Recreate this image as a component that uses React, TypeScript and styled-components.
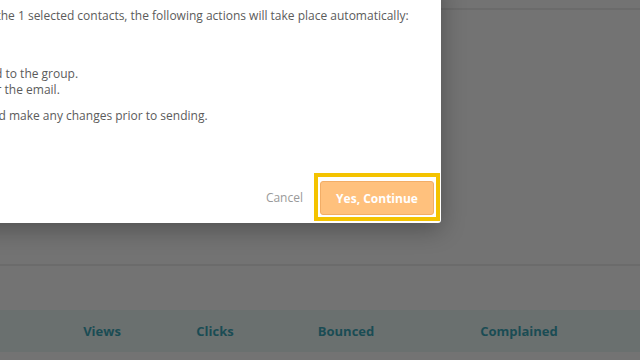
import React from "react";
import styled, { createGlobalStyle } from "styled-components";

const GlobalStyle = createGlobalStyle`
  html, body {
    margin: 0;
    padding: 0;
    width: 640px;
    height: 360px;
    overflow: hidden;
    background: #737373;
    font-family: "Open Sans", "Liberation Sans", sans-serif;
  }
`;

const Page = styled.div`
  position: relative;
  width: 640px;
  height: 360px;
  overflow: hidden;
  background: #737373;
  display: flex;
  flex-direction: column;
`;

const TopRule = styled.div`
  margin-top: 8px;
  height: 2px;
  background: #6b6b6b;
`;

const Content = styled.div`
  height: 254px;
  border-bottom: 2px solid #6b6b6b;
`;

const Spacer = styled.div`
  height: 44px;
`;

const TableHead = styled.div`
  height: 42px;
  background: #6a706f;
  display: grid;
  grid-template-columns: 44px 116px 110px 152px 194px 1fr;
  align-items: center;
`;

const HeadCell = styled.div`
  text-align: center;
  font-size: 13px;
  font-weight: 700;
  color: #1a4c54;
`;

const Modal = styled.div`
  position: absolute;
  left: -160px;
  top: -20px;
  width: 601px;
  height: 243px;
  background: #ffffff;
  border-radius: 3px;
  box-shadow: 0 6px 24px rgba(0, 0, 0, 0.3);
  display: flex;
  flex-direction: column;
`;

const Body = styled.div`
  flex: 1;
  padding: 28px 20px 0 0;
  font-size: 12px;
  line-height: 16px;
  color: #5b5b5b;
`;

const Para = styled.p<{ $gap?: number }>`
  margin: 0 0 ${(p) => p.$gap ?? 0}px 0;
  white-space: nowrap;
`;

const Lead = styled(Para)`
  padding-left: 91px;
`;

const List = styled.ul`
  margin: 0 0 10px 0;
  padding: 0 0 0 20px;
  list-style: none;
  white-space: nowrap;
`;

const Footer = styled.div`
  display: flex;
  justify-content: flex-end;
  align-items: center;
  gap: 11px;
  padding: 0 1px 2px 0;
`;

const CancelButton = styled.button`
  border: none;
  background: none;
  font-family: inherit;
  font-size: 12px;
  color: #9a9a9a;
  padding: 0;
  cursor: pointer;
`;

const FocusRing = styled.div`
  border: 4px solid #f4c300;
  padding: 4px 2px 2px 2px;
  display: flex;
`;

const PrimaryButton = styled.button`
  width: 114px;
  height: 34px;
  border: 1px solid #f2ad66;
  border-radius: 3px;
  background: #ffc17d;
  color: #ffffff;
  font-family: inherit;
  font-size: 12px;
  font-weight: 700;
  outline: none;
  cursor: pointer;
`;

const App: React.FC = () => {
  return (
    <>
      <GlobalStyle />
      <Page>
        <TopRule />
        <Content />
        <Spacer />
        <TableHead>
          <div />
          <HeadCell>Views</HeadCell>
          <HeadCell>Clicks</HeadCell>
          <HeadCell>Bounced</HeadCell>
          <HeadCell>Complained</HeadCell>
          <div />
        </TableHead>

        <Modal>
          <Body>
            <Lead $gap={42}>
              For each of the 1 selected contacts, the following actions will take place automatically:
            </Lead>
            <List>
              <li>The contact will be added to the group.</li>
              <li>A draft will be created for the email.</li>
            </List>
            <Para>You will be able to review and make any changes prior to sending.</Para>
          </Body>
          <Footer>
            <CancelButton>Cancel</CancelButton>
            <FocusRing>
              <PrimaryButton>Yes, Continue</PrimaryButton>
            </FocusRing>
          </Footer>
        </Modal>
      </Page>
    </>
  );
};

export default App;
